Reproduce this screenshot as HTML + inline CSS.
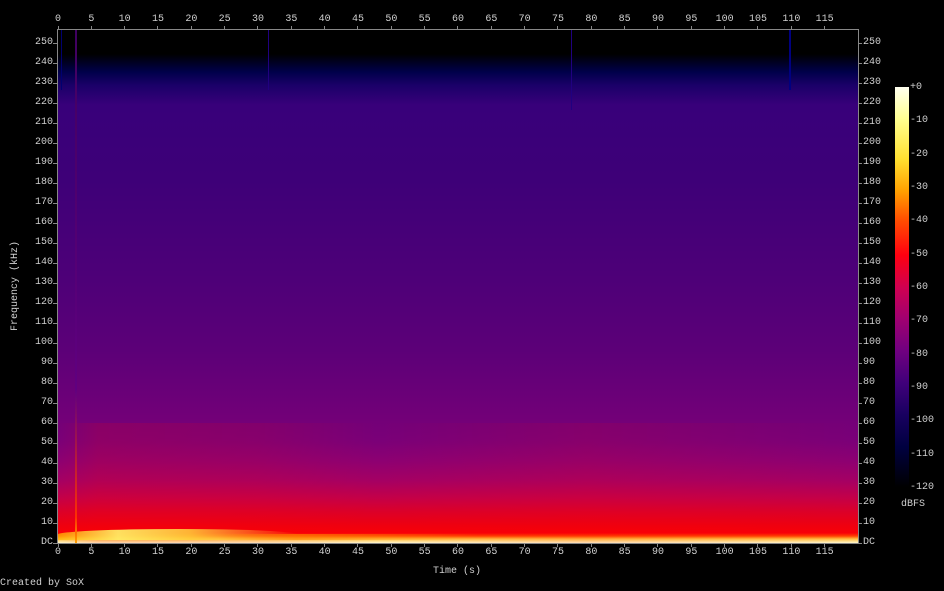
<!DOCTYPE html>
<html><head><style>
body{margin:0;background:#000;width:944px;height:591px;overflow:hidden;position:relative;font-family:"Liberation Mono","DejaVu Sans Mono",monospace;font-size:10px;color:#d0d0d0}
.t{position:absolute;white-space:nowrap;line-height:12px}
#plot{position:absolute;left:58px;top:30px;width:800px;height:513px;
background:linear-gradient(to bottom,#000 0,#000 24px,#00004a 42px,#1a0068 55px,#38007a 75px,#3e0078 150px,#4e0078 250px,#5c0078 320px,#6c0078 370px,#7a0078 410px,#8c0072 430px,#a40064 450px,#c40048 468px,#dc0028 482px,#ee0010 495px,#f80008 503px,#ff4000 506px,#ffc040 509px,#fff8d0 513px)}
#box{position:absolute;left:57px;top:29px;width:800px;height:513px;border:1px solid #888}
.tk{position:absolute;background:#888}
#bar{position:absolute;left:895px;top:87px;width:14px;height:400px;
background:linear-gradient(to bottom,#fffff0 0,#ffff90 8%,#ffe030 18%,#ffa000 26%,#ff5000 33%,#ff0010 42%,#d00050 50%,#a00070 58%,#700080 66%,#40007a 74%,#180060 82%,#000040 90%,#000 100%)}
</style></head><body>
<div id="plot">
<div style="position:absolute;left:0;bottom:0;width:800px;height:120px;background:linear-gradient(to right,rgba(255,0,0,0.0),rgba(255,0,0,0.15) 5%,rgba(255,0,0,0.1) 25%,rgba(255,0,0,0.0) 40%,rgba(255,0,0,0.1) 66%,rgba(255,0,0,0.0) 100%)"></div>
<div style="position:absolute;left:0;bottom:3px;width:240px;height:11px;border-radius:50% 50% 0 0;background:linear-gradient(to right,rgba(255,180,0,0.7),rgba(255,235,100,0.95) 25%,rgba(255,210,60,0.85) 55%,rgba(255,120,0,0) 100%)"></div>
<div style="position:absolute;left:160px;bottom:3px;width:260px;height:6px;background:linear-gradient(to right,rgba(255,160,0,0),rgba(255,140,0,0.6) 30%,rgba(255,120,0,0) 100%)"></div>
<div style="position:absolute;left:17px;top:0;width:2px;height:513px;background:linear-gradient(to bottom,#400060,#600080 70%,#ff3000 95%,#ffa000)"></div>
<div style="position:absolute;left:3px;top:0;width:1px;height:60px;background:#000070"></div>
<div style="position:absolute;left:210px;top:0;width:1px;height:60px;background:#200080"></div>
<div style="position:absolute;left:513px;top:0;width:1px;height:80px;background:#200080"></div>
<div style="position:absolute;left:731px;top:0;width:2px;height:60px;background:#000080"></div>
</div>
<div id="box"></div>
<div id="bar"></div>
<div class="t" style="left:0;top:578px">Created by SoX</div>
<div class="t" style="left:433px;top:566px">Time (s)</div>
<div class="t" style="left:-29px;top:280px;transform:rotate(-90deg);width:90px;text-align:center">Frequency (kHz)</div>
<div class="t" style="left:901px;top:499px">dBFS</div>
<div id="g"></div>
<script>
var g=document.getElementById('g'),h='';
for(var i=0;i<=23;i++){var x=58+i*33.333;var s=String(i*5);
h+='<div class="tk" style="left:'+(x-0.5)+'px;top:26px;width:1px;height:3px"></div>';
h+='<div class="tk" style="left:'+(x-0.5)+'px;top:543px;width:1px;height:4px"></div>';
h+='<div class="t" style="left:'+(x-s.length*3)+'px;top:14px">'+s+'</div>';
h+='<div class="t" style="left:'+(x-s.length*3)+'px;top:547px">'+s+'</div>';}
for(var j=0;j<=25;j++){var y=543-j*20;var s=j==0?'DC':String(j*10);
h+='<div class="tk" style="left:53px;top:'+(y-0.5)+'px;width:4px;height:1px"></div>';
h+='<div class="tk" style="left:858px;top:'+(y-0.5)+'px;width:4px;height:1px"></div>';
h+='<div class="t" style="left:'+(53-s.length*6)+'px;top:'+(y-6)+'px">'+s+'</div>';
h+='<div class="t" style="left:863px;top:'+(y-6)+'px">'+s+'</div>';}
for(var k=0;k<=12;k++){var y=88+k*33.33;var s=k==0?'+0':'-'+(k*10);
h+='<div class="t" style="left:910px;top:'+(y-6)+'px">'+s+'</div>';}
g.innerHTML=h;
</script>
</body></html>
